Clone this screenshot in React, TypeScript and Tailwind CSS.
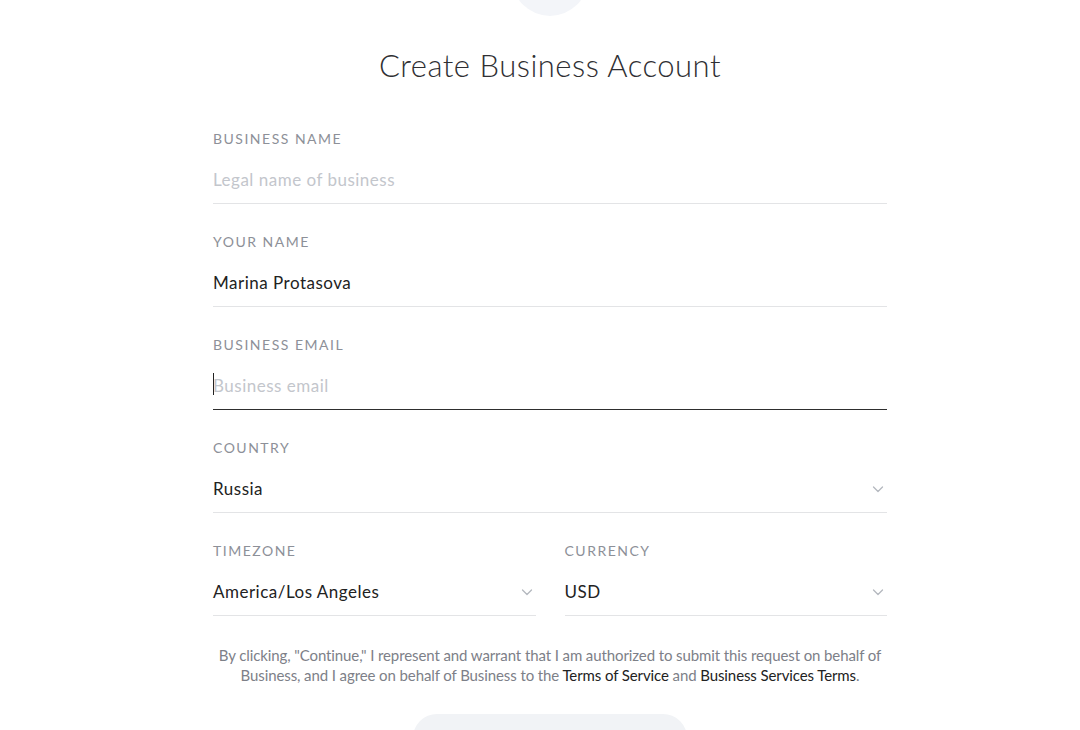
import React from "react";

const font = { fontFamily: '"Lato", "Noto Sans", sans-serif' };

function Chevron() {
  return (
    <svg width="14" height="14" viewBox="0 0 14 14" fill="none" className="shrink-0 mr-[2px]">
      <path d="M2.5 5l4.5 4.5L11.5 5" stroke="#b4b8bf" strokeWidth="1.3" strokeLinecap="round" strokeLinejoin="round" />
    </svg>
  );
}

function Field({
  label,
  value,
  placeholder,
  select,
  focused,
}: {
  label: string;
  value?: string;
  placeholder?: string;
  select?: boolean;
  focused?: boolean;
}) {
  return (
    <div className="flex flex-col">
      <div className="text-[14px] leading-[20px] tracking-[1.5px] text-[#8d9098] uppercase">{label}</div>
      <div
        className={`mt-[7px] h-[48px] flex items-center justify-between border-b ${
          focused ? "border-[#2e2e2e]" : "border-[#e3e4e6]"
        }`}
      >
        <div className="relative flex items-center text-[17px] tracking-[0.5px]">
          {focused && <span className="absolute left-0 top-[0px] w-[1px] h-[22px] bg-[#222]" />}
          {value ? (
            <span className="text-[#222]">{value}</span>
          ) : (
            <span className="text-[#c3c6cc]">{placeholder}</span>
          )}
        </div>
        {select && <Chevron />}
      </div>
    </div>
  );
}

export default function App() {
  return (
    <div className="w-[1080px] h-[730px] bg-white overflow-hidden flex flex-col items-center pl-[20px]" style={font}>
      <div className="w-[76px] h-[76px] rounded-full bg-[#f3f5f9] mt-[-60px] shrink-0" />
      <h1 className="mt-[29px] text-[31px] leading-[40px] text-[#2f2f33] font-light tracking-[0.5px]">
        Create Business Account
      </h1>
      <div className="w-[674px] mt-[44px] flex flex-col gap-[28px]">
        <Field label="Business Name" placeholder="Legal name of business" />
        <Field label="Your Name" value="Marina Protasova" />
        <Field label="Business Email" placeholder="Business email" focused />
        <Field label="Country" value="Russia" select />
        <div className="grid grid-cols-2 gap-[29px]">
          <Field label="Timezone" value="America/Los Angeles" select />
          <Field label="Currency" value="USD" select />
        </div>
      </div>
      <p className="mt-[29px] w-[720px] text-center text-[15px] leading-[20px] text-[#7d8088] tracking-[-0.1px] whitespace-nowrap">
        By clicking, "Continue," I represent and warrant that I am authorized to submit this request on behalf of
        <br />
        Business, and I agree on behalf of Business to the <span className="text-[#222]">Terms of Service</span> and{" "}
        <span className="text-[#222]">Business Services Terms</span>.
      </p>
      <div className="mt-[29px] w-[274px] h-[48px] rounded-full bg-[#f1f3f6] shrink-0" />
    </div>
  );
}
